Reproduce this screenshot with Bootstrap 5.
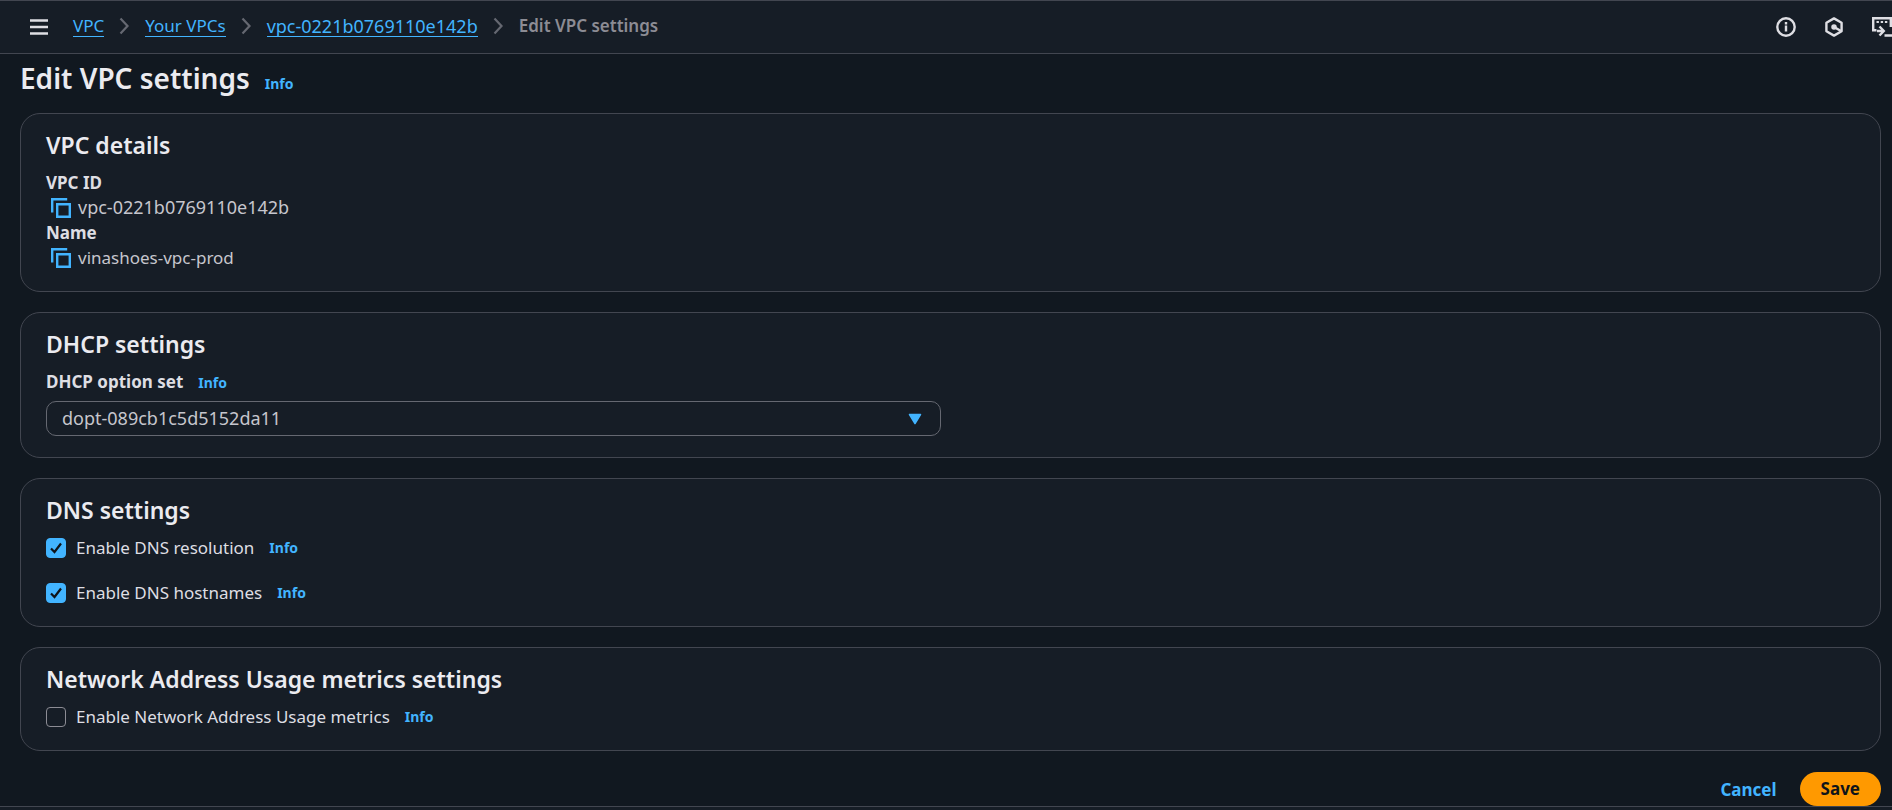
<!DOCTYPE html>
<html lang="en" data-bs-theme="dark">
<head>
<meta charset="utf-8">
<meta name="viewport" content="width=device-width, initial-scale=1">
<title>Edit VPC settings</title>
<link href="https://cdn.jsdelivr.net/npm/bootstrap@5.3.0/dist/css/bootstrap.min.css" rel="stylesheet">
<style>
  :root { --surface: #161d26; --canvas: #111820; --line: #424650; --accent: #42b4ff; --bright: #ebebf0; --copy: #c6c6cd; --soft: #dedee3; }
  body { font-family: "Noto Sans", "Open Sans", sans-serif; font-size: 17px; line-height: 25px; color: var(--copy); background: var(--canvas); overflow-x: hidden; }
  svg { display: block; flex: none; }
  .topbar { background: var(--surface); border-top: 1px solid var(--line); border-bottom: 1px solid var(--line); height: 54px; padding-left: 29px; }
  .tool-btn { background: none; border: 0; padding: 0; color: var(--soft); }
  .crumbs { --bs-breadcrumb-margin-bottom: 2px; gap: 15px; padding-left: 24px; }
  .crumbs a { color: var(--accent); text-decoration: none; border-bottom: 1px solid var(--accent); line-height: 20px; display: block; }
  .crumbs .here { color: #8c8c94; font-weight: 600; }
  .crumbs li { display: flex; align-items: center; gap: 15px; line-height: 20px; }
  .ident { font-size: 18px; }
  .tools { gap: 28px; }
  .page { padding: 4px 11px 0 20px; }
  h1 { font-size: 28px; line-height: 40px; font-weight: 600; color: var(--bright); margin: 0; }
  h2 { font-size: 23px; line-height: 30px; font-weight: 600; color: var(--bright); margin: 0 0 10px; }
  .info { font-size: 14px; font-weight: 700; color: var(--accent); text-decoration: none; margin-left: 15px; line-height: 25px; }
  .panels { gap: 20px; margin-top: 15px; }
  .panel { --bs-card-bg: var(--surface); --bs-card-border-color: var(--line); --bs-card-border-radius: 20px; --bs-card-color: var(--copy); padding: 16px 25px 21px; }
  dt, .field-name { font-weight: 700; color: var(--soft); }
  dd { gap: 7px; margin: 0; padding-left: 5px; }
  .copy-btn { background: none; border: 0; padding: 0; color: var(--accent); }
  .half { --bs-gutter-x: 20px; }
  .field-head { margin-bottom: 6px; }
  .pick { height: 35px; padding: 0 50px 0 15px; border: 1px solid #656871; border-radius: 10px; color: var(--copy); font-size: 18px; line-height: 25px; background-color: var(--surface);
    background-image: url("data:image/svg+xml,%3Csvg xmlns='http://www.w3.org/2000/svg' viewBox='0 0 20 20'%3E%3Cpath d='M4.500 5.500h11l-5.500 9z' fill='%2342b4ff' stroke='%2342b4ff' stroke-width='1.500' stroke-linejoin='round'/%3E%3C/svg%3E"); background-size: 20px 20px; background-position: right 15px center; }
  .tick { width: 20px; height: 20px; margin: 3px 10px 0 0 !important; float: none !important; flex: none; }
  .tick.form-check-input { border: 1px solid #8c8c94; border-radius: 4px; background-color: var(--surface); }
  .tick.form-check-input:checked { background-color: var(--accent); border-color: var(--accent); background-size: 20px;
    background-image: url("data:image/svg+xml,%3Csvg xmlns='http://www.w3.org/2000/svg' viewBox='0 0 20 20'%3E%3Cpath d='M5 10.500l3.500 3.500L15 5.500' fill='none' stroke='%230f141a' stroke-width='2.200'/%3E%3C/svg%3E"); }
  .checks { gap: 20px; }
  .checks label { color: var(--soft); }
  .actions { gap: 23px; padding-top: 21px; }
  .cancel { color: var(--accent); font-weight: 700; text-decoration: none; }
  .save { --bs-btn-bg: #ff9900; --bs-btn-color: #0f141a; --bs-btn-hover-bg: #ffb546; --bs-btn-hover-color: #0f141a; --bs-btn-border-width: 0; font-size: 17px; line-height: 25px; font-weight: 700; padding: 4px 21px 5px; }
  .console-foot { background: var(--surface); border-top: 1px solid var(--line); }
</style>
</head>
<body class="d-flex flex-column min-vh-100">
<header class="topbar d-flex align-items-center">
  <button class="tool-btn" type="button" aria-label="Menu">
    <svg width="20" height="20" viewBox="0 0 20 20" fill="none" stroke="currentColor" stroke-width="2.500"><path d="M1 3.500h18M1 10h18M1 16.500h18"/></svg>
  </button>
  <nav class="me-auto" aria-label="Breadcrumb">
    <ol class="breadcrumb crumbs">
      <li><a href="#">VPC</a><svg width="11" height="18" viewBox="0 0 11 18" fill="none" stroke="#656871" stroke-width="2.200"><path d="M1.500 1.500l7 7.500-7 7.500"/></svg></li>
      <li><a href="#">Your VPCs</a><svg width="11" height="18" viewBox="0 0 11 18" fill="none" stroke="#656871" stroke-width="2.200"><path d="M1.500 1.500l7 7.500-7 7.500"/></svg></li>
      <li><a class="ident" href="#">vpc-0221b0769110e142b</a><svg width="11" height="18" viewBox="0 0 11 18" fill="none" stroke="#656871" stroke-width="2.200"><path d="M1.500 1.500l7 7.500-7 7.500"/></svg></li>
      <li class="here" aria-current="page">Edit VPC settings</li>
    </ol>
  </nav>
  <div class="tools d-flex">
    <button class="tool-btn" type="button" aria-label="Information"><svg width="20" height="20" viewBox="0 0 20 20" fill="none" stroke="currentColor" stroke-width="2.400"><circle cx="10" cy="10" r="8.700"/><path d="M10 8.500v6M10 5v2.400"/></svg></button>
    <button class="tool-btn" type="button" aria-label="Diagnostics"><svg width="20" height="20" viewBox="0 0 20 20" fill="none" stroke="currentColor" stroke-width="2.400" stroke-linejoin="round"><path d="M10 1.400l7.600 4.300v8.600L10 18.600l-7.600-4.300V5.700z"/><circle cx="10" cy="10" r="2" fill="currentColor" stroke-width="1.500"/><path d="M10 10l7 4"/></svg></button>
    <button class="tool-btn" type="button" aria-label="CloudShell"><svg width="20" height="20" viewBox="0 0 20 20" fill="none" stroke="currentColor" stroke-width="2.400"><path d="M4.500 13.300H1.200V1.200h17.600v8.800M5 14h6M7.500 9.500l4.300 4.500-4.300 4.500M12.500 18.500H20"/><path d="M4.500 5h11" stroke-width="2" stroke-dasharray="2.400 1.800"/></svg></button>
  </div>
</header>

<main class="page">
  <div class="d-flex align-items-baseline"><h1>Edit VPC settings</h1><a class="info" href="#">Info</a></div>
  <form>
  <div class="panels d-flex flex-column">
    <section class="card panel">
      <h2>VPC details</h2>
      <dl class="mb-0">
        <dt>VPC ID</dt>
        <dd class="d-flex align-items-center"><button class="copy-btn" type="button" aria-label="Copy VPC ID"><svg width="20" height="20" viewBox="0 0 20 20" fill="none" stroke="currentColor" stroke-width="2.400"><path d="M1.200 14.500V1.200h15M6.200 6.200h12.600v12.600H6.200z"/></svg></button><span class="ident">vpc-0221b0769110e142b</span></dd>
        <dt>Name</dt>
        <dd class="d-flex align-items-center"><button class="copy-btn" type="button" aria-label="Copy name"><svg width="20" height="20" viewBox="0 0 20 20" fill="none" stroke="currentColor" stroke-width="2.400"><path d="M1.200 14.500V1.200h15M6.200 6.200h12.600v12.600H6.200z"/></svg></button><span>vinashoes-vpc-prod</span></dd>
      </dl>
    </section>

    <section class="card panel">
      <h2>DHCP settings</h2>
      <div class="row half"><div class="col-6">
        <div class="field-head d-flex align-items-baseline"><label class="field-name" for="dhcp">DHCP option set</label><a class="info" href="#">Info</a></div>
        <select class="form-select pick" id="dhcp"><option>dopt-089cb1c5d5152da11</option></select>
      </div></div>
    </section>

    <section class="card panel">
      <h2>DNS settings</h2>
      <div class="checks d-flex flex-column">
        <div class="d-flex"><input class="form-check-input tick" type="checkbox" id="res" checked><label for="res">Enable DNS resolution</label><a class="info" href="#">Info</a></div>
        <div class="d-flex"><input class="form-check-input tick" type="checkbox" id="host" checked><label for="host">Enable DNS hostnames</label><a class="info" href="#">Info</a></div>
      </div>
    </section>

    <section class="card panel">
      <h2>Network Address Usage metrics settings</h2>
      <div class="checks d-flex flex-column">
        <div class="d-flex"><input class="form-check-input tick" type="checkbox" id="nau"><label for="nau">Enable Network Address Usage metrics</label><a class="info" href="#">Info</a></div>
      </div>
    </section>
  </div>
  <div class="actions d-flex justify-content-end align-items-center">
    <a class="cancel" href="#">Cancel</a>
    <button class="btn save rounded-pill" type="submit">Save</button>
  </div>
  </form>
</main>
<footer class="console-foot flex-grow-1"></footer>
<script src="https://cdn.jsdelivr.net/npm/bootstrap@5.3.0/dist/js/bootstrap.bundle.min.js"></script>
</body>
</html>
